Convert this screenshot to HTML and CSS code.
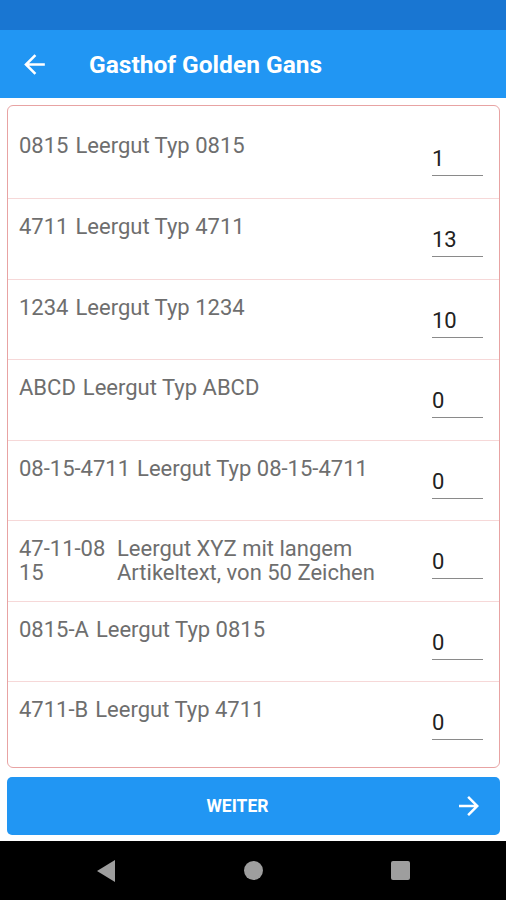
FILE: index.html
```html
<!DOCTYPE html>
<html lang="de">
  <head>
    <meta charset="UTF-8" />
    <meta name="viewport" content="width=device-width, initial-scale=1" />
    <title>Gasthof Golden Gans</title>
    <link rel="stylesheet" href="styles.css">
  </head>

  <body>
    <div class="screen">

      <div class="status-bar"></div>

      <div class="app-bar">
        <svg class="back" width="31" height="31" viewBox="0 0 24 24">
          <path d="M20 11H7.83l5.59-5.59L12 4l-8 8 8 8 1.41-1.41L7.83 13H20v-2z" fill="#fff"/>
        </svg>
        <div class="title">Gasthof Golden Gans</div>
      </div>

      <div class="content">
        <div class="card">

          <div class="row">
            <div class="code">0815</div>
            <div class="desc">Leergut Typ 0815</div>
            <div class="qty">1</div>
          </div>

          <div class="row">
            <div class="code">4711</div>
            <div class="desc">Leergut Typ 4711</div>
            <div class="qty">13</div>
          </div>

          <div class="row">
            <div class="code">1234</div>
            <div class="desc">Leergut Typ 1234</div>
            <div class="qty">10</div>
          </div>

          <div class="row">
            <div class="code">ABCD</div>
            <div class="desc">Leergut Typ ABCD</div>
            <div class="qty">0</div>
          </div>

          <div class="row">
            <div class="code">08-15-4711</div>
            <div class="desc">Leergut Typ 08-15-4711</div>
            <div class="qty">0</div>
          </div>

          <div class="row">
            <div class="code narrow">47-11-0815</div>
            <div class="desc">Leergut XYZ mit langem Artikeltext, von 50 Zeichen</div>
            <div class="qty">0</div>
          </div>

          <div class="row">
            <div class="code">0815-A</div>
            <div class="desc">Leergut Typ 0815</div>
            <div class="qty">0</div>
          </div>

          <div class="row">
            <div class="code">4711-B</div>
            <div class="desc">Leergut Typ 4711</div>
            <div class="qty">0</div>
          </div>

        </div>

        <button class="next">
          <span class="next-label">WEITER</span>
          <svg width="30" height="30" viewBox="0 0 24 24">
            <path d="M12 4l-1.41 1.41L16.17 11H4v2h12.17l-5.58 5.59L12 20l8-8z" fill="#fff"/>
          </svg>
        </button>
      </div>

      <div class="nav-bar">
        <span class="nav-back"></span>
        <span class="nav-home"></span>
        <span class="nav-recent"></span>
      </div>

    </div>
  </body>
</html>
```

FILE: styles.css
```css
body{
  margin: 0;
  background: #FFFFFF;
  font-family: Roboto, "Liberation Sans", sans-serif;
}

.screen{
  width: 506px;
  height: 900px;
  display: flex;
  flex-direction: column;
}

.status-bar{
  height: 30px;
  background: #1976D2;
}

.app-bar{
  height: 68px;
  display: flex;
  align-items: center;
  background: #2196F3;
  color: #FFFFFF;
}

.back{
  margin-left: 19px;
  margin-right: 39px;
}

.title{
  font-size: 24.5px;
  font-weight: bold;
}

.content{
  flex: 1;
  padding: 7px 6px 6px 7px;
  display: flex;
  flex-direction: column;
}

.card{
  padding: 12px 0 5px 0;
  border: 1px solid #E8A3A3;
  border-radius: 6px;
}

.row{
  height: 80.45px;
  display: flex;
  align-items: flex-start;
  padding: 0 16px 0 11px;
  box-sizing: border-box;
  border-top: 1px solid #F6D8D8;
  font-size: 22px;
  line-height: 24px;
  color: #6E6E6E;
}

.row:first-child{
  border-top: none;
}

.code{
  flex: none;
  margin-right: 7px;
  padding-top: 16px;
}

.code.narrow{
  width: 91px;
  margin-right: 7px;
  word-break: break-all;
}

.desc{
  flex: 1;
  padding-top: 16px;
}

.qty{
  width: 51px;
  margin-left: 14px;
  margin-top: 29px;
  padding-bottom: 4px;
  border-bottom: 1.5px solid #8A8A8A;
  color: #222222;
}

.next{
  height: 58px;
  margin-top: 9px;
  display: flex;
  align-items: center;
  padding: 0 16px 0 14px;
  border: none;
  border-radius: 5px;
  background: #2196F3;
  font-family: Roboto, "Liberation Sans", sans-serif;
}

.next-label{
  flex: 1;
  text-align: center;
  font-size: 17.5px;
  font-weight: bold;
  color: #FFFFFF;
}

.nav-bar{
  height: 59px;
  display: flex;
  align-items: center;
  background: #000000;
}

.nav-back{
  width: 0;
  height: 0;
  margin-left: 97px;
  border-top: 11px solid transparent;
  border-bottom: 11px solid transparent;
  border-right: 18px solid #9E9E9E;
}

.nav-home{
  width: 19px;
  height: 19px;
  margin-left: 129px;
  border-radius: 50%;
  background: #9E9E9E;
}

.nav-recent{
  width: 19px;
  height: 19px;
  margin-left: 128px;
  border-radius: 2px;
  background: #9E9E9E;
}
```
